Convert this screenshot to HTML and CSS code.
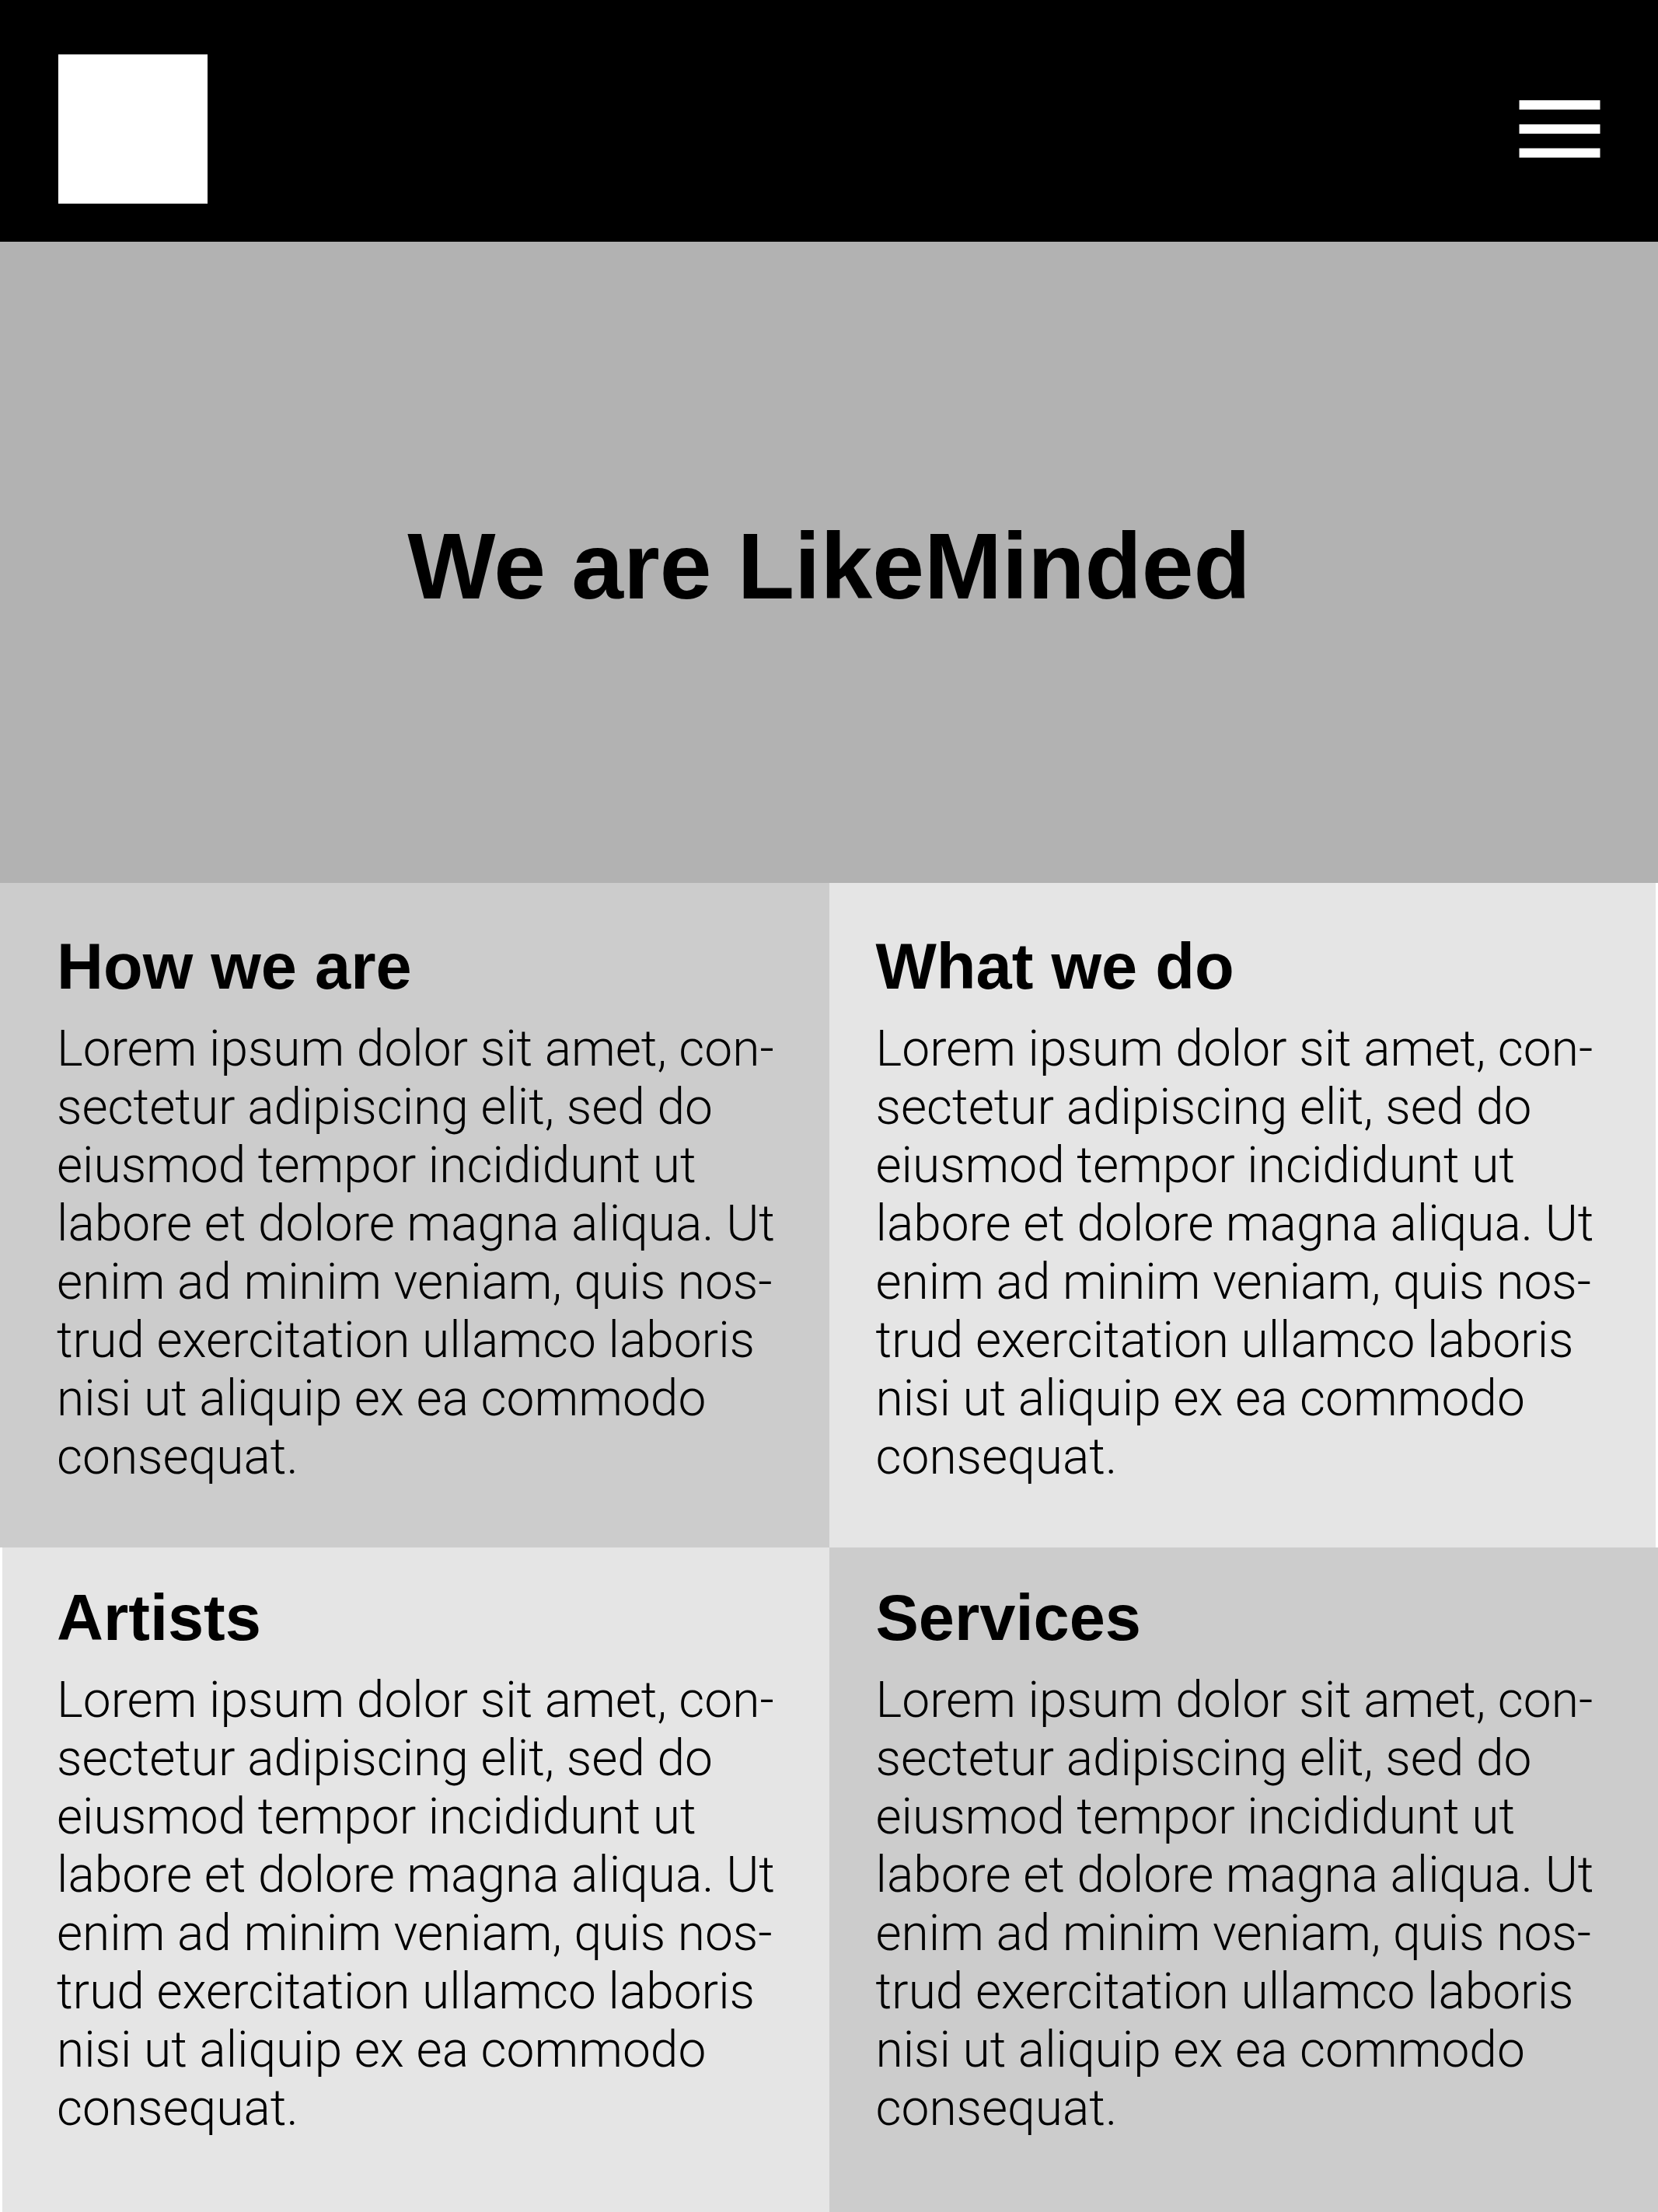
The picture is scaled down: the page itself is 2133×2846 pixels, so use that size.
FILE: index.html
```html
<!DOCTYPE html>
<html lang="en">
<head>
<meta charset="utf-8">
<meta name="viewport" content="width=device-width, initial-scale=1">
<title>LikeMinded</title>
<link rel="stylesheet" href="styles.css">
</head>
<body>
<header class="site-header">
  <a class="logo" href="#" aria-label="LikeMinded home"></a>
  <button class="menu-button" type="button" aria-label="Open menu">
    <svg class="menu-icon" viewBox="0 0 105 74" aria-hidden="true">
      <path d="M0.500 0h104v12H0.500zM0.500 31h104v12H0.500zM0.500 61.700h104v12H0.500z"/>
    </svg>
  </button>
</header>
<main>
  <section class="hero">
    <h1 class="hero-title">We are LikeMinded</h1>
  </section>
  <div class="cards">
    <section class="card card-upper card-left card-dark">
      <h2 class="card-title">How we are</h2>
      <p class="card-text">Lorem ipsum dolor sit amet, con&shy;sectetur adipiscing elit, sed do eiusmod tempor incididunt ut labore et dolore magna aliqua. Ut enim ad minim veniam, quis nos&shy;trud exercitation ullamco laboris nisi ut aliquip ex ea commodo consequat.</p>
    </section>
    <section class="card card-upper card-right card-light">
      <h2 class="card-title">What we do</h2>
      <p class="card-text">Lorem ipsum dolor sit amet, con&shy;sectetur adipiscing elit, sed do eiusmod tempor incididunt ut labore et dolore magna aliqua. Ut enim ad minim veniam, quis nos&shy;trud exercitation ullamco laboris nisi ut aliquip ex ea commodo consequat.</p>
    </section>
    <section class="card card-left card-light">
      <h2 class="card-title">Artists</h2>
      <p class="card-text">Lorem ipsum dolor sit amet, con&shy;sectetur adipiscing elit, sed do eiusmod tempor incididunt ut labore et dolore magna aliqua. Ut enim ad minim veniam, quis nos&shy;trud exercitation ullamco laboris nisi ut aliquip ex ea commodo consequat.</p>
    </section>
    <section class="card card-right card-dark">
      <h2 class="card-title">Services</h2>
      <p class="card-text">Lorem ipsum dolor sit amet, con&shy;sectetur adipiscing elit, sed do eiusmod tempor incididunt ut labore et dolore magna aliqua. Ut enim ad minim veniam, quis nos&shy;trud exercitation ullamco laboris nisi ut aliquip ex ea commodo consequat.</p>
    </section>
  </div>
</main>
</body>
</html>
```
FILE: styles.css
```css
* {
  box-sizing: border-box;
}

body {
  margin: 0;
  background: #fff;
  color: #000;
  font-family: "Liberation Sans", Arial, sans-serif;
}

.site-header {
  display: flex;
  align-items: center;
  justify-content: space-between;
  padding: 70px 74px 49px 75px;
  background: #000;
}

.logo {
  width: 192px;
  height: 192px;
  background: #fff;
}

.menu-button {
  padding: 0;
  border: 0;
  background: none;
  cursor: pointer;
}

.menu-icon {
  display: block;
  width: 105px;
  height: 74px;
  fill: #fff;
}

.hero {
  display: grid;
  place-items: center;
  min-height: 825px;
  padding: 48px 40px 40px;
  background: #b2b2b2;
}

.hero-title {
  margin: 0;
  font-size: 120px;
  line-height: 136px;
  font-weight: 700;
}

.cards {
  display: grid;
  grid-template-columns: 1fr 1fr;
  grid-auto-rows: minmax(855px, auto);
}

.card {
  padding-top: 43px;
  padding-bottom: 40px;
}

.card-upper {
  padding-top: 60px;
}

.card-left {
  padding-left: 73px;
  padding-right: 40px;
}

.card-right {
  padding-left: 60px;
  padding-right: 40px;
}

.card-dark {
  background: #ccc;
}

.card-light {
  background: #e5e5e5;
}

.card-left.card-light {
  padding-left: 70px;
  border-left: 3px solid #fff;
}

.card-right.card-light {
  padding-right: 37px;
  border-right: 3px solid #fff;
}

.card-title {
  margin: 0 0 20px;
  font-size: 83px;
  line-height: 96px;
  font-weight: 700;
}

.card-text {
  margin: 0;
  font-family: Roboto, "Liberation Sans", sans-serif;
  font-size: 64px;
  line-height: 75px;
  font-weight: 300;
}
```
